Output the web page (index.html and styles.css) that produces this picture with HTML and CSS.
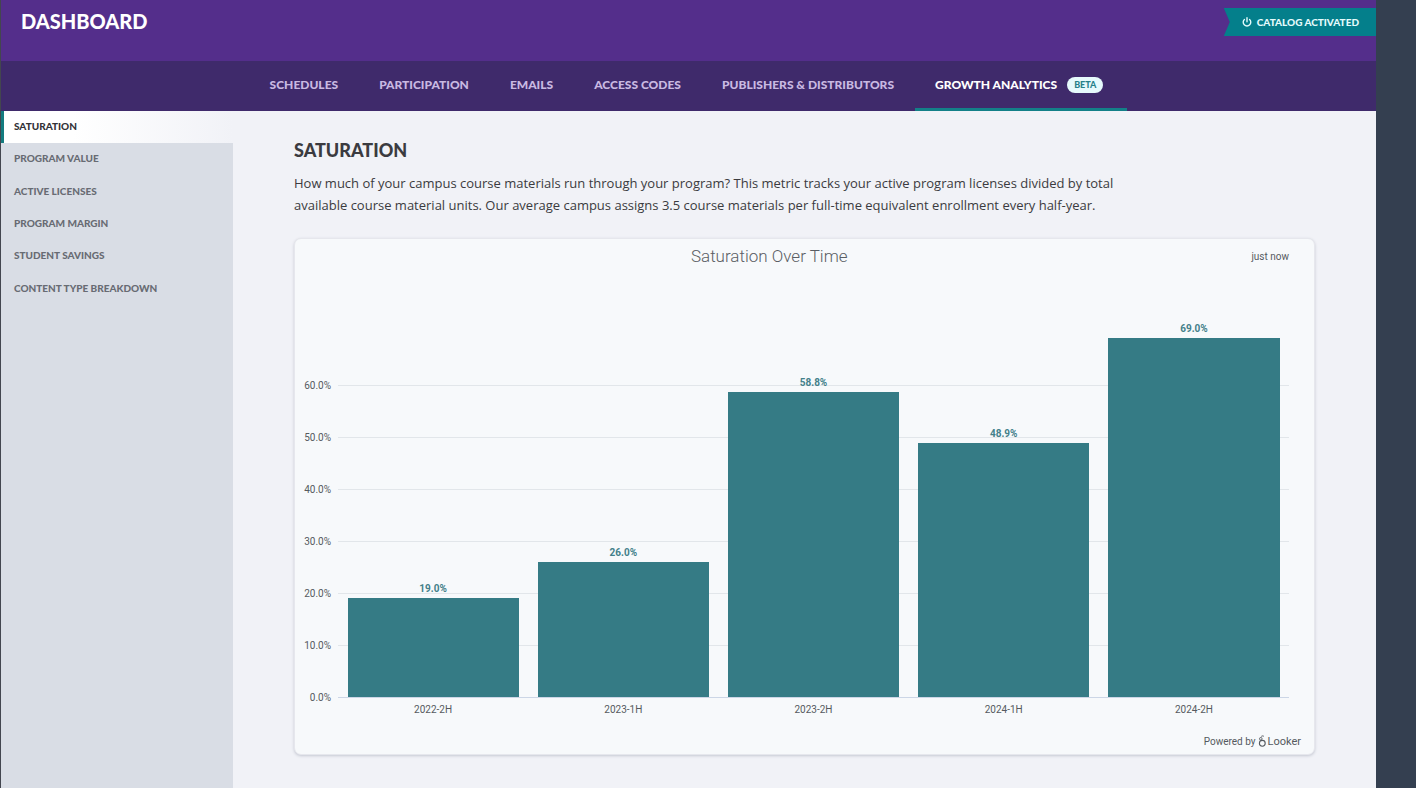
FILE: index.html
```html
<!DOCTYPE html>
<html lang="en">
<head>
<meta charset="utf-8">
<meta name="viewport" content="width=device-width, initial-scale=1">
<title>Dashboard</title>
<link rel="stylesheet" href="styles.css">
</head>
<body>
<div class="page">
  <header class="header">
    <h1 class="header-title">DASHBOARD</h1>
    <button class="ribbon" type="button">
      <svg class="ribbon-icon" viewBox="0 0 10 10" aria-hidden="true"><path d="M2.4 2.4A3.8 3.8 0 1 0 7.6 2.4M5 .8V4.8" fill="none" stroke="currentColor" stroke-width="1.4" stroke-linecap="round"/></svg>
      CATALOG ACTIVATED
    </button>
  </header>
  <nav class="tabs" aria-label="Dashboard sections">
    <a class="tab" href="#">SCHEDULES</a>
    <a class="tab" href="#">PARTICIPATION</a>
    <a class="tab" href="#">EMAILS</a>
    <a class="tab" href="#">ACCESS CODES</a>
    <a class="tab" href="#">PUBLISHERS &amp; DISTRIBUTORS</a>
    <a class="tab tab-active" href="#" aria-current="page">GROWTH ANALYTICS <span class="badge">BETA</span></a>
  </nav>
  <div class="body">
    <nav class="side" aria-label="Growth analytics">
      <div class="side-list">
        <a class="side-link side-link-active" href="#" aria-current="page">SATURATION</a>
        <a class="side-link" href="#">PROGRAM VALUE</a>
        <a class="side-link" href="#">ACTIVE LICENSES</a>
        <a class="side-link" href="#">PROGRAM MARGIN</a>
        <a class="side-link" href="#">STUDENT SAVINGS</a>
        <a class="side-link" href="#">CONTENT TYPE BREAKDOWN</a>
      </div>
    </nav>
    <main class="content">
      <h2 class="content-title">SATURATION</h2>
      <p class="intro">How much of your campus course materials run through your program? This metric tracks your active program licenses divided by total available course material units. Our average campus assigns 3.5 course materials per full-time equivalent enrollment every half-year.</p>
      <section class="card">
        <div class="card-head">
          <h3 class="card-title">Saturation Over Time</h3>
          <span class="card-time">just now</span>
        </div>
        <div class="chart">
          <div class="y-axis">
            <span>60.0%</span><span>50.0%</span><span>40.0%</span><span>30.0%</span><span>20.0%</span><span>10.0%</span><span>0.0%</span>
          </div>
          <div class="grid-lines"><i></i><i></i><i></i><i></i><i></i><i></i><i></i></div>
          <div class="bars">
            <div class="slot"><span class="value">19.0%</span><div class="bar" style="height:99px"></div></div>
            <div class="slot"><span class="value">26.0%</span><div class="bar" style="height:135px"></div></div>
            <div class="slot"><span class="value">58.8%</span><div class="bar" style="height:305px"></div></div>
            <div class="slot"><span class="value">48.9%</span><div class="bar" style="height:254px"></div></div>
            <div class="slot"><span class="value">69.0%</span><div class="bar" style="height:359px"></div></div>
          </div>
          <div class="x-axis"><span>2022-2H</span><span>2023-1H</span><span>2023-2H</span><span>2024-1H</span><span>2024-2H</span></div>
        </div>
        <footer class="powered">
          Powered by
          <svg class="looker-icon" viewBox="0 0 8 12" aria-hidden="true"><g fill="none" stroke="currentColor"><circle cx="4.3" cy="8.3" r="2.9" stroke-width="1.1"/><circle cx="2.8" cy="3.8" r="1.3" stroke-width=".9"/><path d="M3.3 1.3Q4.6.6 5.8 1.2" stroke-width="1"/></g></svg>
          <span class="looker">Looker</span>
        </footer>
      </section>
    </main>
  </div>
</div>
</body>
</html>
```
FILE: styles.css
```css
* { box-sizing: border-box; }
body {
  margin: 0;
  background: #343f50;
  color: #3b3b40;
  font-family: Lato, "Open Sans", sans-serif;
}
a { color: inherit; text-decoration: none; }
.page {
  display: flex;
  flex-direction: column;
  min-height: 100vh;
  margin-right: 40px;
  border-left: 1px solid #43464f;
  background: #f1f2f7;
}
.header {
  display: flex;
  justify-content: space-between;
  align-items: flex-start;
  height: 61px;
  padding: 8px 0 0 20px;
  background: #542e8b;
}
.header-title {
  margin: 0;
  color: #fff;
  font-size: 20px;
  font-weight: 900;
  line-height: 26px;
}
.ribbon {
  display: flex;
  align-items: center;
  gap: 5px;
  height: 28px;
  padding: 0 17px 0 18px;
  border: 0;
  background: #047f8b;
  clip-path: polygon(0 0, 100% 0, 100% 100%, 0 100%, 6px 50%);
  color: #e4fbfc;
  font: 900 10px/28px Lato, sans-serif;
}
.ribbon-icon { width: 10px; height: 10px; }
.tabs {
  display: flex;
  justify-content: center;
  gap: 1px;
  height: 50px;
  background: #3f2a6b;
  color: #c9b9e2;
  font-size: 12px;
  font-weight: 900;
}
.tab {
  display: flex;
  align-items: center;
  padding: 0 20px;
  border-bottom: 3px solid transparent;
  white-space: nowrap;
}
.tab-active { padding-right: 24px; border-color: #138088; color: #fff; }
.badge {
  margin-left: 10px;
  padding: 0 7px;
  border-radius: 8px;
  background: #e6f9fc;
  color: #26808a;
  font-size: 9px;
  line-height: 16px;
}
.body { display: flex; flex: 1; }
.side {
  flex: 0 0 232px;
  background: #d9dde5;
  color: #686b73;
  font-size: 10px;
  font-weight: 900;
}
.side-list { display: grid; grid-auto-rows: 1fr; height: 194px; }
.side-link { padding: 0 13px; line-height: 30px; }
.side-link-active {
  padding-left: 10px;
  border-left: 3px solid #147b7f;
  background: linear-gradient(90deg, #fff 30%, #f1f2f7);
  color: #333338;
}
.content { flex: 1; padding: 27px 61px 32px; }
.content-title { margin: 0 0 10px; font-size: 18px; font-weight: 900; line-height: 24px; }
.intro { max-width: 830px; margin: 0 0 22px; font-family: "Open Sans", sans-serif; font-size: 13px; line-height: 22px; }
.card {
  border: 1px solid #e6e7ed;
  border-radius: 7px;
  background: #f7f9fb;
  box-shadow: 0 1px 3px #c5c8d2;
  color: #555a60;
  font-family: Roboto, sans-serif;
  font-size: 10px;
}
.card-head { display: flex; align-items: center; gap: 16px; height: 34px; padding: 0 25px 0 8px; }
.card-title { flex: 1; margin: 0; color: #5a5e64; font-size: 17px; font-weight: 300; text-align: center; }
.chart {
  display: grid;
  grid-template: 425px 26px / 43px 1fr;
  padding-right: 25px;
}
.y-axis { grid-area: 1 / 1 / 3 / 2; display: flex; flex-direction: column; justify-content: flex-end; padding-right: 7px; text-align: right; line-height: 52px; }
.grid-lines { grid-area: 1 / 2; display: flex; flex-direction: column; justify-content: flex-end; }
.grid-lines i { height: 52px; border-bottom: 1px solid #e2e6ea; }
.grid-lines i:last-child { border-color: #ccd6e6; }
.bars { grid-area: 1 / 2; display: flex; padding-bottom: 1px; }
.slot { flex: 1; display: flex; flex-direction: column; justify-content: flex-end; align-items: center; }
.value { color: #43808a; font-weight: 700; line-height: 18px; }
.bar { width: 90%; background: #357b85; }
.x-axis { grid-area: 2 / 2; display: flex; text-align: center; line-height: 24px; }
.x-axis span { flex: 1; }
.powered { display: flex; justify-content: flex-end; align-items: center; gap: 2px; height: 30px; padding: 4px 13px 0 0; }
.looker-icon { width: 8px; height: 12px; }
.looker { font-size: 11px; }
```
